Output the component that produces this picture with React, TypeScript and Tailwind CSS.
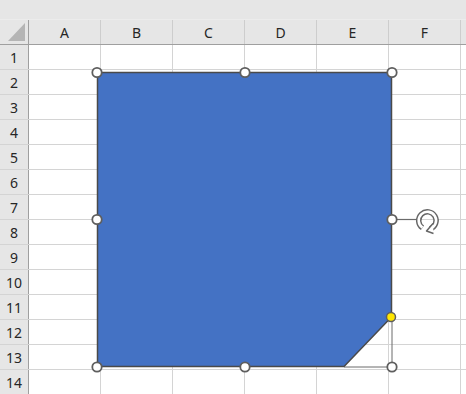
import React from "react";

const columns = ["A", "B", "C", "D", "E", "F", ""];
const rows = Array.from({ length: 14 }, (_, i) => i + 1);

const handles: [number, number][] = [
  [97, 72.5],
  [245, 72.5],
  [392, 72.5],
  [97, 219.5],
  [392, 219.5],
  [97, 367],
  [245, 367],
  [392, 367],
];

const HeaderRow: React.FC = () => (
  <div className="flex h-[25px] bg-[#e6e6e6] border-b border-[#9f9f9f]">
    <div className="relative w-[29px] shrink-0 border-r border-[#9f9f9f]">
      <div className="absolute left-[8px] top-[3px] w-0 h-0 border-l-[17px] border-l-transparent border-b-[18px] border-b-[#b5b5b5]" />
    </div>
    {columns.map((c, i) => (
      <div
        key={i}
        className="w-[72px] shrink-0 border-r border-[#cdcdcd] flex items-center justify-center text-[14px] text-[#262626]"
      >
        {c}
      </div>
    ))}
  </div>
);

const Row: React.FC<{ n: number }> = ({ n }) => (
  <div className="flex h-[25px] border-b border-[#d4d4d4]">
    <div className="w-[29px] shrink-0 bg-[#e6e6e6] border-r border-[#9f9f9f] flex items-center justify-center text-[14px] text-[#262626]">
      {n}
    </div>
    {columns.map((_, i) => (
      <div key={i} className="w-[72px] shrink-0 border-r border-[#d4d4d4] bg-white" />
    ))}
  </div>
);

const ShapeOverlay: React.FC = () => (
  <svg className="absolute left-0 top-0" width={466} height={394} viewBox="0 0 466 394">
    <polyline
      points="392,317 392,367 344,367"
      fill="none"
      stroke="#6b6b6b"
      strokeWidth={1}
    />
    <polygon
      points="97.5,72.5 391.5,72.5 391.5,317 344,366.5 97.5,366.5"
      fill="#4472c4"
      stroke="#4a4a4a"
      strokeWidth={1.5}
    />
    <line x1={397} y1={219.5} x2={418} y2={219.5} stroke="#6b6b6b" strokeWidth={1.2} />
    {/* rotate handle */}
    <g transform="translate(427.5,220.5)">
      <path
        d="M -5 7.2 A 8.7 8.7 0 1 1 2.5 8.3"
        fill="none"
        stroke="#666"
        strokeWidth={5.5}
      />
      <path
        d="M -5 7.2 A 8.7 8.7 0 1 1 2.5 8.3"
        fill="none"
        stroke="#fff"
        strokeWidth={2.6}
      />
      <path
        d="M 5.5 3 L -1 10.5 L 6 13"
        fill="white"
        stroke="#666"
        strokeWidth={1.5}
        strokeLinejoin="round"
      />
    </g>
    {handles.map(([x, y], i) => (
      <circle key={i} cx={x} cy={y} r={4.7} fill="#fff" stroke="#5e5e5e" strokeWidth={1.8} />
    ))}
    <circle cx={391} cy={317} r={4.5} fill="#ffe600" stroke="#5e5e5e" strokeWidth={1.5} />
  </svg>
);

const App: React.FC = () => {
  return (
    <div
      className="relative w-[466px] h-[394px] overflow-hidden bg-white"
      style={{ fontFamily: '"Noto Sans", "Liberation Sans", sans-serif' }}
    >
      <div className="h-[20px] bg-[#e6e6e6] border-b border-[#ececec]" />
      <HeaderRow />
      {rows.map((n) => (
        <Row key={n} n={n} />
      ))}
      <ShapeOverlay />
    </div>
  );
};

export default App;
